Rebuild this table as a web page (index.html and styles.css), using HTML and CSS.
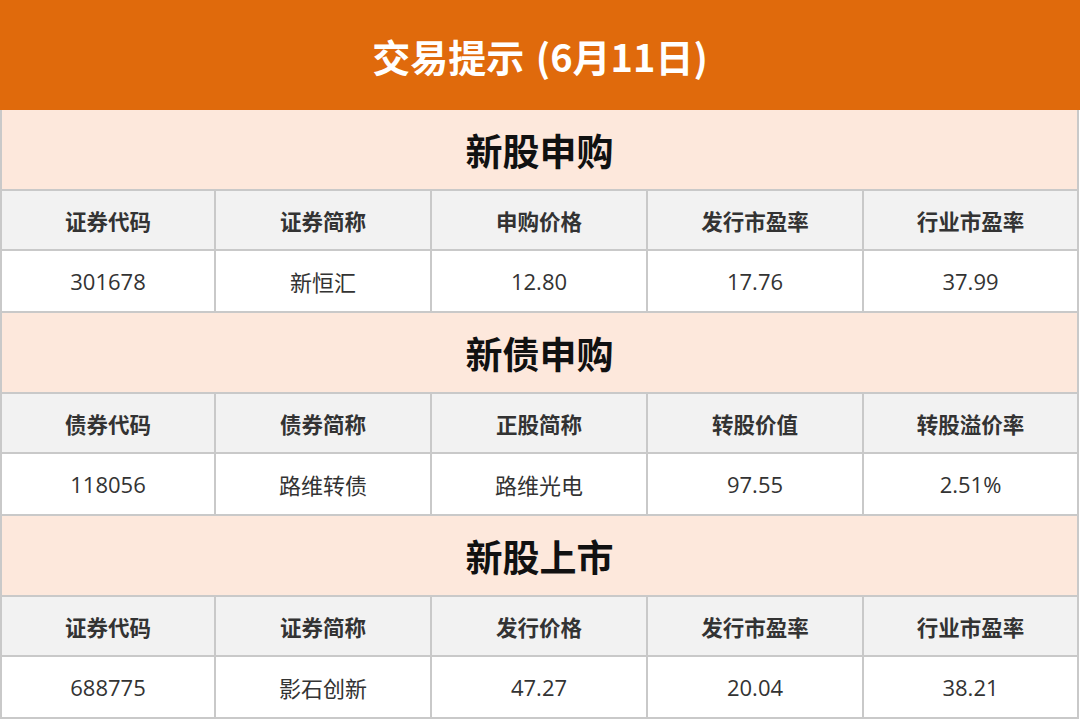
FILE: index.html
```html
<!DOCTYPE html>
<html lang="zh-CN">
<head>
<meta charset="utf-8">
<title>交易提示</title>
<link rel="stylesheet" href="styles.css">
</head>
<body>
<header class="banner">交易提示 (6月11日)</header>

<section class="section">
  <h2 class="sec-title">新股申购</h2>
  <div class="grid">
    <div class="cell head">证券代码</div>
    <div class="cell head">证券简称</div>
    <div class="cell head">申购价格</div>
    <div class="cell head">发行市盈率</div>
    <div class="cell head">行业市盈率</div>
    <div class="cell data">301678</div>
    <div class="cell data">新恒汇</div>
    <div class="cell data">12.80</div>
    <div class="cell data">17.76</div>
    <div class="cell data">37.99</div>
  </div>
</section>

<section class="section">
  <h2 class="sec-title">新债申购</h2>
  <div class="grid">
    <div class="cell head">债券代码</div>
    <div class="cell head">债券简称</div>
    <div class="cell head">正股简称</div>
    <div class="cell head">转股价值</div>
    <div class="cell head">转股溢价率</div>
    <div class="cell data">118056</div>
    <div class="cell data">路维转债</div>
    <div class="cell data">路维光电</div>
    <div class="cell data">97.55</div>
    <div class="cell data">2.51%</div>
  </div>
</section>

<section class="section">
  <h2 class="sec-title">新股上市</h2>
  <div class="grid">
    <div class="cell head">证券代码</div>
    <div class="cell head">证券简称</div>
    <div class="cell head">发行价格</div>
    <div class="cell head">发行市盈率</div>
    <div class="cell head">行业市盈率</div>
    <div class="cell data">688775</div>
    <div class="cell data">影石创新</div>
    <div class="cell data">47.27</div>
    <div class="cell data">20.04</div>
    <div class="cell data">38.21</div>
  </div>
</section>
</body>
</html>
```

FILE: styles.css
```css
* { box-sizing: border-box; }
html, body {
  margin: 0;
  padding: 0;
  background: #ffffff;
}
body {
  width: 1080px;
  font-family: "Open Sans", "Noto Sans CJK SC", sans-serif;
  color: #333333;
}
.banner {
  height: 110px;
  background: #e06a0c;
  color: #ffffff;
  font-family: "Noto Sans CJK SC", sans-serif;
  font-weight: 700;
  font-size: 38px;
  word-spacing: 3px;
  display: flex;
  align-items: center;
  justify-content: center;
}
.section {
  width: 1079px;
  background: #c9c9c9;
  padding: 0 2px 2px 2px;
}
.sec-title {
  margin: 0 -2px 2px -2px;
  height: 79px;
  background: #fde8dc;
  color: #111111;
  font-family: "Noto Sans CJK SC", sans-serif;
  font-weight: 700;
  font-size: 37px;
  display: flex;
  align-items: center;
  justify-content: center;
  border-left: 2px solid #c9c9c9;
  border-right: 2px solid #c9c9c9;
}
.grid {
  display: grid;
  grid-template-columns: 212px 214px 214px 214px 1fr;
  grid-template-rows: 58px 60px;
  gap: 2px;
}
.cell {
  display: flex;
  align-items: center;
  justify-content: center;
  font-size: 22px;
}
.head {
  background: #f2f2f2;
  font-family: "Noto Sans CJK SC", sans-serif;
  font-weight: 700;
  font-size: 21.5px;
  color: #333333;
}
.data {
  background: #ffffff;
  color: #333333;
}
```
